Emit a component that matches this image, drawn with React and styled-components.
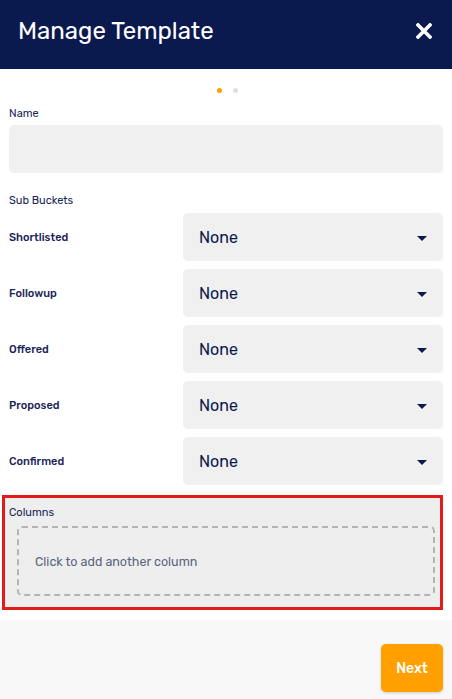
import React from "react";
import styled, { createGlobalStyle } from "styled-components";

const Global = createGlobalStyle`
  html, body { margin: 0; padding: 0; background: #ffffff; }
  body { font-family: Rubik, Inter, "Noto Sans", sans-serif; }
  * { box-sizing: border-box; }
`;

const Page = styled.div`
  width: 452px;
  height: 699px;
  display: flex;
  flex-direction: column;
  background: #ffffff;
`;

const Header = styled.header`
  height: 69px;
  flex: none;
  background: #0b1a4e;
  display: flex;
  align-items: center;
  justify-content: space-between;
  padding: 0 20px 8px 18px;
`;

const Title = styled.h1`
  margin: 0;
  color: #ffffff;
  font-size: 24px;
  font-weight: 400;
  letter-spacing: 0;
`;

const CloseButton = styled.button`
  border: 0;
  background: none;
  padding: 0;
  width: 16px;
  height: 16px;
  display: flex;
  cursor: pointer;
`;

const Body = styled.div`
  flex: 1;
  display: flex;
  flex-direction: column;
  padding: 0 9px;
`;

const Dots = styled.div`
  display: flex;
  justify-content: center;
  gap: 11px;
  padding: 19px 0 0 3px;
  height: 38px;
`;

const Dot = styled.span`
  width: 5px;
  height: 5px;
  border-radius: 50%;
  background: ${(p) => (p.$active ? "#ffa000" : "#dedede")};
`;

const Label = styled.div`
  font-size: 11px;
  color: #1b2559;
  line-height: 14px;
`;

const TextInput = styled.div`
  margin-top: 4px;
  height: 48px;
  border-radius: 5px;
  background: #f0f0f0;
`;

const SectionLabel = styled(Label)`
  margin-top: 21px;
`;

const Rows = styled.div`
  margin-top: 5px;
  display: flex;
  flex-direction: column;
  gap: 8px;
`;

const Row = styled.div`
  display: flex;
  align-items: center;
  justify-content: space-between;
`;

const RowLabel = styled.div`
  font-size: 11px;
  font-weight: 500;
  color: #1b2559;
`;

const Select = styled.div`
  width: 260px;
  height: 48px;
  border-radius: 5px;
  background: #f0f0f0;
  display: flex;
  align-items: center;
  justify-content: space-between;
  padding: 0 16px 0 16px;
  color: #0b1a4e;
  font-size: 16px;
`;

const Caret = styled.span`
  width: 0;
  height: 0;
  border-left: 5px solid transparent;
  border-right: 5px solid transparent;
  border-top: 5px solid #0b1a4e;
  margin-top: 2px;
`;

const ColumnsBox = styled.div`
  margin: 10px 0 0 -7px;
  width: 441px;
  height: 115px;
  border: 3px solid #e41b1b;
  background: #eeeeee;
  padding: 8px 5px 0 12px;
  display: flex;
  flex-direction: column;
`;

const ColumnsLabel = styled(Label)`
  margin-left: -8px;
`;

const AddColumn = styled.button`
  margin-top: 6px;
  height: 70px;
  border: 2px dashed #b4b4b4;
  border-radius: 5px;
  background: transparent;
  display: flex;
  align-items: center;
  padding: 0 0 0 16px;
  font-family: inherit;
  font-size: 12.5px;
  color: #5c6480;
  cursor: pointer;
`;

const Footer = styled.footer`
  margin-top: 10px;
  flex: none;
  height: 79px;
  background: #f8f8f8;
  display: flex;
  justify-content: flex-end;
  align-items: flex-start;
  padding: 24px 9px 0 0;
`;

const NextButton = styled.button`
  width: 62px;
  height: 48px;
  border: 0;
  border-radius: 5px;
  background: #ffa000;
  color: #ffffff;
  font-family: inherit;
  font-size: 14px;
  font-weight: 500;
  box-shadow: 0 1px 3px rgba(0, 0, 0, 0.18);
  cursor: pointer;
`;

const buckets = ["Shortlisted", "Followup", "Offered", "Proposed", "Confirmed"];

export default function App() {
  return (
    <Page>
      <Global />
      <Header>
        <Title>Manage Template</Title>
        <CloseButton aria-label="Close">
          <svg width="16" height="16" viewBox="0 0 16 16">
            <path d="M2 2 L14 14 M14 2 L2 14" stroke="#ffffff" strokeWidth="3.6" strokeLinecap="square" />
          </svg>
        </CloseButton>
      </Header>
      <Body>
        <Dots>
          <Dot $active />
          <Dot />
        </Dots>
        <Label>Name</Label>
        <TextInput />
        <SectionLabel>Sub Buckets</SectionLabel>
        <Rows>
          {buckets.map((b) => (
            <Row key={b}>
              <RowLabel>{b}</RowLabel>
              <Select>
                <span>None</span>
                <Caret />
              </Select>
            </Row>
          ))}
        </Rows>
        <ColumnsBox>
          <ColumnsLabel>Columns</ColumnsLabel>
          <AddColumn>Click to add another column</AddColumn>
        </ColumnsBox>
      </Body>
      <Footer>
        <NextButton>Next</NextButton>
      </Footer>
    </Page>
  );
}
